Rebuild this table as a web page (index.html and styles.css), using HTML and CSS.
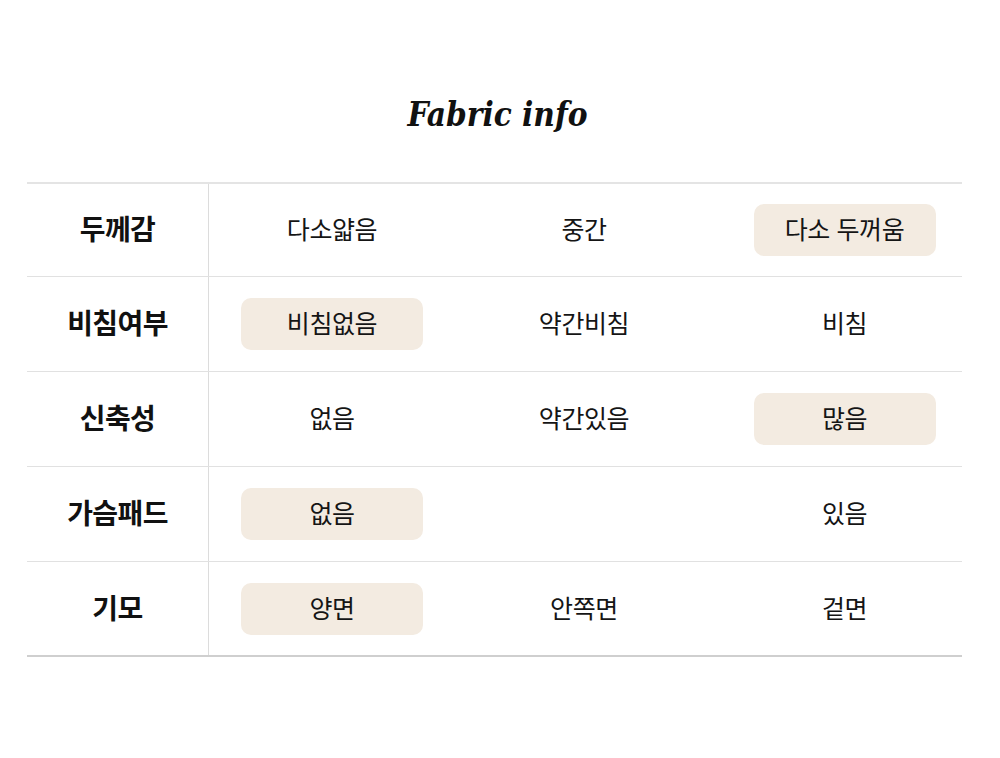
FILE: index.html
```html
<!DOCTYPE html>
<html lang="ko">
<head>
<meta charset="utf-8">
<link rel="stylesheet" href="styles.css">
</head>
<body>
<main class="page">
  <h1 class="title">Fabric info</h1>
  <div class="table">
    <div class="row first">
      <div class="label">두께감</div>
      <div class="cell c1"><span class="opt">다소얇음</span></div>
      <div class="cell c2"><span class="opt">중간</span></div>
      <div class="cell c3"><span class="opt on">다소 두꺼움</span></div>
    </div>
    <div class="row">
      <div class="label">비침여부</div>
      <div class="cell c1"><span class="opt on">비침없음</span></div>
      <div class="cell c2"><span class="opt">약간비침</span></div>
      <div class="cell c3"><span class="opt">비침</span></div>
    </div>
    <div class="row">
      <div class="label">신축성</div>
      <div class="cell c1"><span class="opt">없음</span></div>
      <div class="cell c2"><span class="opt">약간있음</span></div>
      <div class="cell c3"><span class="opt on">많음</span></div>
    </div>
    <div class="row">
      <div class="label">가슴패드</div>
      <div class="cell c1"><span class="opt on">없음</span></div>
      <div class="cell c2"></div>
      <div class="cell c3"><span class="opt">있음</span></div>
    </div>
    <div class="row last">
      <div class="label">기모</div>
      <div class="cell c1"><span class="opt on">양면</span></div>
      <div class="cell c2"><span class="opt">안쪽면</span></div>
      <div class="cell c3"><span class="opt">겉면</span></div>
    </div>
  </div>
</main>
</body>
</html>
```

FILE: styles.css
```css
* { box-sizing: border-box; }
html, body { margin: 0; padding: 0; background: #fff; }
body {
  font-family: "Noto Sans CJK KR", "Noto Sans", sans-serif;
  color: #111;
}
.page {
  width: 1000px;
  padding: 92px 38px 0 27px;
}
.title {
  margin: 0 0 44px;
  text-align: center;
  font-family: "DejaVu Serif", serif;
  font-style: italic;
  font-weight: 700;
  font-stretch: condensed;
  font-size: 33px;
  line-height: 46px;
  color: #111;
  padding-left: 6px;
}
.table {
  width: 935px;
}
.row {
  display: grid;
  grid-template-columns: 182px 246px 258px 1fr;
  height: 95px;
  border-bottom: 1px solid #e1e1e1;
}
.row.first { border-top: 2px solid #e4e4e4; }
.row.last { border-bottom: 2px solid #cfcfcf; }
.label {
  display: flex;
  align-items: center;
  justify-content: center;
  font-weight: 700;
  font-size: 28px;
  letter-spacing: -0.6px;
  padding-bottom: 4px;
  border-right: 1px solid #dcdcdc;
}
.cell {
  display: flex;
  align-items: center;
  justify-content: center;
}
.c3 { padding-left: 14px; }
.opt {
  display: flex;
  align-items: center;
  justify-content: center;
  width: 182px;
  height: 52px;
  padding-bottom: 4px;
  border-radius: 10px;
  font-size: 25px;
  letter-spacing: -0.4px;
  color: #151515;
}
.opt.on { background: #f3ebe1; }
```
